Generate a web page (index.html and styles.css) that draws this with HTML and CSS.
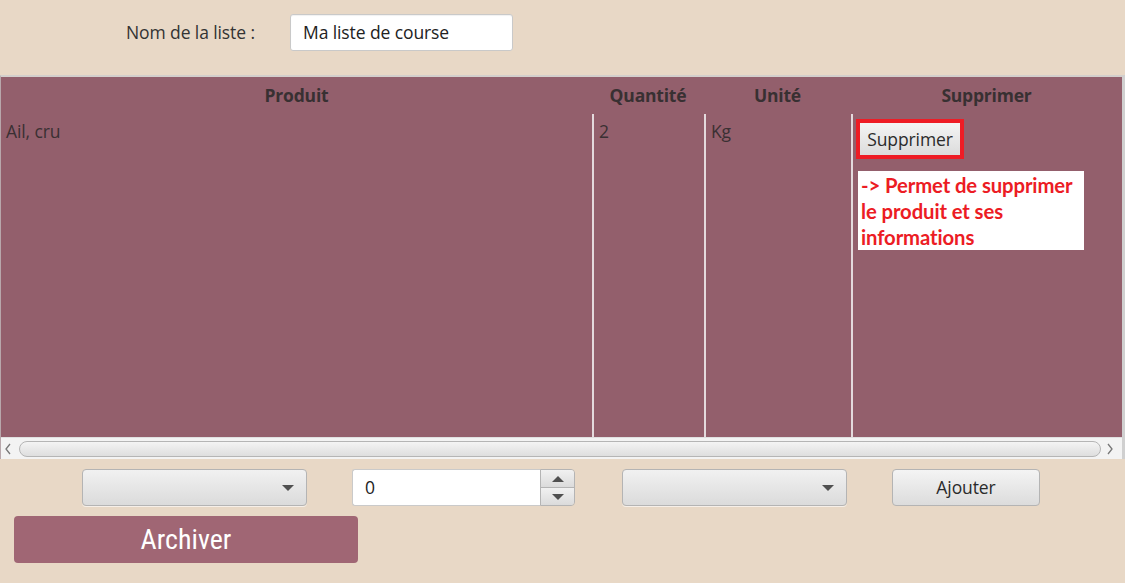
FILE: index.html
```html
<!DOCTYPE html>
<html lang="fr">
<head>
<meta charset="utf-8">
<title>Liste de course</title>
<link rel="stylesheet" href="styles.css">
</head>
<body>
<div class="app">
  <div class="top">
    <span class="label">Nom de la liste :</span>
    <div class="text-field name-field">Ma liste de course</div>
  </div>

  <div class="table">
    <div class="grid">
      <div class="th">Produit</div>
      <div class="th">Quantité</div>
      <div class="th">Unité</div>
      <div class="th">Supprimer</div>

      <div class="td first">Ail, cru</div>
      <div class="td">2</div>
      <div class="td">Kg</div>
      <div class="td action">
        <div class="highlight"><button class="btn del">Supprimer</button></div>
        <div class="note">-&gt; Permet de supprimer<br>le produit et ses<br>informations</div>
      </div>
    </div>
    <div class="hscroll">
      <svg class="arrow" width="8" height="12" viewBox="0 0 8 12"><path d="M6 1 L2 6 L6 11" fill="none" stroke="#777" stroke-width="1.3"/></svg>
      <div class="track"></div>
      <svg class="arrow" width="8" height="12" viewBox="0 0 8 12"><path d="M2 1 L6 6 L2 11" fill="none" stroke="#777" stroke-width="1.3"/></svg>
    </div>
  </div>

  <div class="controls">
    <div class="combo"><span class="caret"></span></div>
    <div class="spinner">
      <div class="spin-field">0</div>
      <div class="spin-btns">
        <div class="spin-btn"><span class="up"></span></div>
        <div class="spin-btn"><span class="down"></span></div>
      </div>
    </div>
    <div class="combo"><span class="caret"></span></div>
    <button class="btn add">Ajouter</button>
  </div>

  <button class="archive">Archiver</button>
</div>
</body>
</html>
```

FILE: styles.css
```css
* { box-sizing: border-box; }
html, body { margin: 0; padding: 0; }
body {
  width: 1125px;
  height: 583px;
  background: #e8d8c6;
  font-family: "Open Sans", "Noto Sans", sans-serif;
  color: #333;
  overflow: hidden;
}
.app { display: flex; flex-direction: column; }

.top {
  height: 75px;
  display: flex;
  align-items: flex-start;
  padding-top: 14px;
  padding-left: 126px;
}
.label {
  font-size: 17.5px;
  line-height: 37px;
  width: 164px;
  letter-spacing: -0.1px;
}
.text-field {
  background: #fff;
  border: 1px solid #c9c9c9;
  border-radius: 3px;
  box-shadow: inset 0 1px 1px rgba(0,0,0,0.06);
}
.name-field {
  width: 223px;
  height: 37px;
  padding-left: 12px;
  font-size: 17.5px;
  line-height: 35px;
  color: #222;
  letter-spacing: -0.1px;
}

.table {
  border-top: 2px solid #d3cfcc;
  border-left: 1px solid #b8a7ab;
  border-right: 3px solid #d0d0d0;
  width: 1125px;
  background: #935f6c;
}
.grid {
  display: grid;
  grid-template-columns: 591px 112px 147px 1fr;
  grid-template-rows: 37px 323px;
}
.th {
  font-weight: 700;
  font-size: 17.5px;
  text-align: center;
  line-height: 37px;
  color: #383032;
  letter-spacing: -0.2px;
}
.td {
  border-left: 2px solid #e4dadd;
  padding: 5px 5px;
  font-size: 17.5px;
  color: #3a3033;
  letter-spacing: -0.1px;
}
.td.first { border-left: none; }
.td.action { padding: 5px 0 0 3px; }

.highlight {
  display: inline-block;
  border: 4px solid #ee1c25;
}
.btn {
  font-family: "Open Sans", "Noto Sans", sans-serif;
  font-size: 17.5px;
  color: #2b2b2b;
  background: linear-gradient(#f4f4f4, #dcdcdc);
  border: 1px solid #b9b9b9;
  border-radius: 3px;
  letter-spacing: -0.1px;
  padding: 0;
  cursor: default;
}
.btn.del {
  display: block;
  width: 100px;
  height: 32px;
  border: none;
  border-radius: 0;
  line-height: 32px;
}
.note {
  margin-top: 12px;
  margin-left: 2px;
  width: 226px;
  background: #fff;
  color: #ec1c24;
  font-family: Lato, "Noto Sans", sans-serif;
  font-weight: 700;
  font-size: 20.3px;
  line-height: 26px;
  padding: 1px 2px 0 3px;
  white-space: nowrap;
}

.hscroll {
  height: 22px;
  background: #f3f3f3;
  display: flex;
  align-items: center;
  padding: 0 8px 0 3px;
  border-top: 1px solid #e0e0e0;
}
.arrow { flex: none; }
.track {
  flex: 1;
  height: 16px;
  margin: 0 5px 0 7px;
  border: 1px solid #b5b5b5;
  border-radius: 8px;
  background: linear-gradient(#f4f4f4, #dedede);
}

.controls {
  display: flex;
  gap: 45px;
  padding-left: 82px;
  margin-top: 10px;
  height: 37px;
}
.combo {
  width: 225px;
  height: 37px;
  border: 1px solid #b4b4b4;
  border-radius: 4px;
  background: linear-gradient(#f1f1f1, #dbdbdb);
  position: relative;
  box-shadow: 0 1px 0 rgba(255,255,255,0.6);
}
.caret {
  position: absolute;
  right: 12px;
  top: 15px;
  width: 0; height: 0;
  border-left: 6px solid transparent;
  border-right: 6px solid transparent;
  border-top: 6px solid #505050;
}
.spinner {
  display: flex;
  width: 223px;
  height: 37px;
  margin-right: 2px;
}
.spin-field {
  flex: 1;
  background: #fff;
  border: 1px solid #cacaca;
  border-right: none;
  border-radius: 3px 0 0 3px;
  padding-left: 12px;
  font-size: 17.5px;
  line-height: 35px;
  color: #222;
}
.spin-btns {
  width: 35px;
  display: flex;
  flex-direction: column;
  border: 1px solid #b4b4b4;
  border-radius: 0 4px 4px 0;
  overflow: hidden;
}
.spin-btn {
  flex: 1;
  background: linear-gradient(#f1f1f1, #dbdbdb);
  display: flex;
  align-items: center;
  justify-content: center;
}
.spin-btn + .spin-btn { border-top: 1px solid #b4b4b4; }
.up, .down {
  width: 0; height: 0;
  border-left: 6px solid transparent;
  border-right: 6px solid transparent;
}
.up { border-bottom: 6px solid #505050; }
.down { border-top: 6px solid #505050; }

.btn.add {
  width: 148px;
  height: 37px;
  border-radius: 4px;
  border-color: #b4b4b4;
  line-height: 35px;
}

.archive {
  margin: 10px 0 0 14px;
  width: 344px;
  height: 47px;
  background: #a06674;
  border: none;
  border-radius: 4px;
  color: #fff;
  font-family: "Liberation Sans Narrow", "Roboto Condensed", Roboto, sans-serif;
  font-size: 28px;
  padding: 0;
  cursor: default;
}
```
